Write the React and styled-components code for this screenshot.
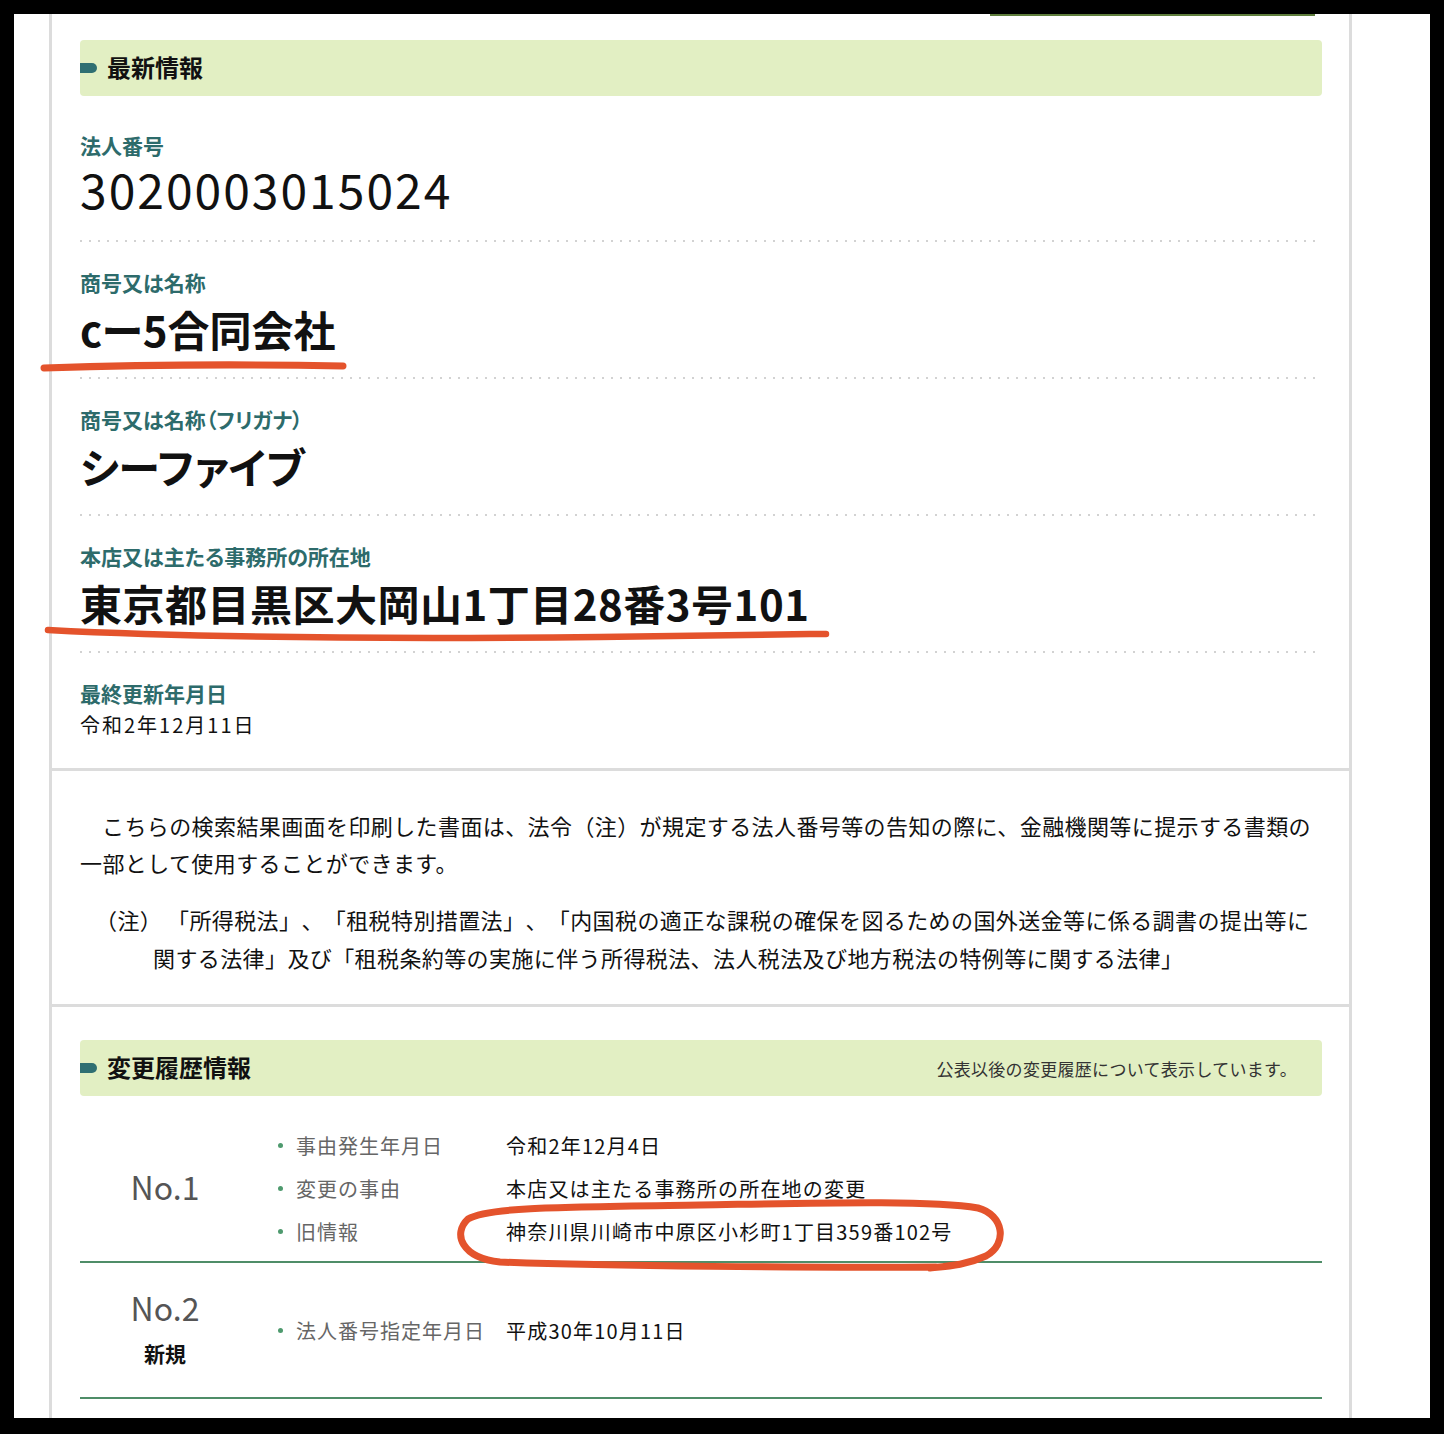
import React from 'react';
import styled, { createGlobalStyle } from 'styled-components';

const Global = createGlobalStyle`
  html, body { margin: 0; padding: 0; background: #000; }
  body { font-family: "Noto Sans CJK JP", "Noto Sans", sans-serif; color: #111; }
  *, *::before, *::after { box-sizing: border-box; }
`;

const Screen = styled.div`
  position: relative;
  width: 1444px;
  height: 1434px;
  padding: 14px 14px 16px;
  background: #000;
  overflow: hidden;
`;

const Page = styled.div`
  height: 1404px;
  background: #fff;
  padding-left: 35px;
  overflow: hidden;
`;

const Panel = styled.div`
  width: 1303px;
  height: 100%;
  border-left: 3px solid #dcdcdc;
  border-right: 3px solid #dcdcdc;
  display: flex;
  flex-direction: column;
`;

const TopAccent = styled.div`
  flex: none;
  height: 2px;
  width: 325px;
  margin-left: 938px;
  background: #5e7d3c;
`;

const Section = styled.section`
  flex: ${p => (p.$grow ? 1 : 'none')};
  padding: ${p => p.$pad};
  border-bottom: ${p => (p.$last ? 'none' : '3px solid #dcdcdc')};
`;

const SectionHead = styled.div`
  display: flex;
  align-items: center;
  height: 56px;
  padding-right: 25px;
  background: #e2efc3;
  border-radius: 4px;
`;

const Marker = styled.span`
  flex: none;
  width: 17px;
  height: 10px;
  margin-right: 10px;
  background: #2f6f72;
  border-radius: 0 5px 5px 0;
`;

const HeadTitle = styled.h2`
  flex: 1;
  margin: 0 0 2px;
  font-size: 24px;
  font-weight: 700;
  line-height: 1;
  color: #111;
`;

const HeadNote = styled.span`
  font-size: 17px;
  letter-spacing: 0.3px;
  color: #333;
`;

const Field = styled.div`
  padding: 25px 0 ${p => p.$pb || 20}px;
  margin-top: ${p => (p.$first ? '9px' : '0')};
`;

const FieldLabel = styled.div`
  font-size: 21px;
  line-height: 30px;
  font-weight: 700;
  color: #2d6b6b;
  font-feature-settings: "palt";
`;

const FieldValue = styled.div`
  margin-top: ${p => p.$gap}px;
  font-size: ${p => p.$size}px;
  line-height: ${p => p.$lh}px;
  font-weight: ${p => p.$weight};
  letter-spacing: ${p => p.$spacing || 0}px;
  color: #111;
  font-feature-settings: "palt";
  white-space: nowrap;
`;

const Dots = styled.div`
  height: 2px;
  background-image: linear-gradient(to right, #d2d2d2 0 2px, transparent 2px 9px);
  background-size: 9px 2px;
  background-repeat: repeat-x;
`;

const Lead = styled.p`
  margin: 0;
  font-size: 22px;
  letter-spacing: 0.4px;
  line-height: 37px;
  text-indent: 1em;
  color: #111;
`;

const Note = styled.p`
  margin: 19px 0 0;
  padding-left: 73px;
  text-indent: -58px;
  font-size: 22px;
  letter-spacing: 0.4px;
  line-height: 38px;
  color: #111;
  text-spacing-trim: space-all;
`;

const NoteMark = styled.span`
  display: inline-block;
  width: 72px;
  text-indent: 0;
`;

const HistoryList = styled.div`
  margin-top: 20px;
`;

const HistoryRow = styled.div`
  display: flex;
  align-items: center;
  padding: ${p => (p.$roomy ? '24px 0' : '8px 0')};
  border-bottom: 2px solid #4f8d68;
`;

const NumCol = styled.div`
  flex: none;
  width: 170px;
  display: flex;
  flex-direction: column;
  align-items: center;
`;

const NumLabel = styled.div`
  font-size: 32px;
  line-height: 40px;
  color: #555;
  margin-top: ${p => (p.$solo ? '-6px' : '0')};
`;

const NumTag = styled.div`
  margin-top: 6px;
  font-size: 21px;
  line-height: 40px;
  font-weight: 700;
  color: #111;
`;

const Items = styled.ul`
  margin: 0;
  padding: 0;
  list-style: none;
`;

const Item = styled.li`
  display: flex;
  align-items: center;
  height: 43px;
  font-size: 20px;
  letter-spacing: 1px;
  &::before {
    content: "";
    flex: none;
    width: 5px;
    height: 5px;
    margin: 0 13px 0 28px;
    border-radius: 50%;
    background: #4e9a6e;
  }
`;

const ItemLabel = styled.span`
  flex: none;
  width: 210px;
  color: #666;
`;

const ItemValue = styled.span`
  color: #111;
  letter-spacing: 1.2px;
  white-space: nowrap;
`;

const Marks = styled.svg`
  position: absolute;
  left: 0;
  top: 0;
  width: 1444px;
  height: 1434px;
  pointer-events: none;
`;

const fields = [
  { label: '法人番号', value: '3020003015024', size: 48, lh: 56, weight: 400, spacing: 2, gap: 0, pb: 24 },
  { label: '商号又は名称', value: 'cー5合同会社', size: 42, lh: 56, weight: 700, gap: 4 },
  { label: '商号又は名称（フリガナ）', value: 'シーファイブ', size: 42, lh: 56, weight: 700, gap: 4 },
  { label: '本店又は主たる事務所の所在地', value: '東京都目黒区大岡山1丁目28番3号101', size: 42, lh: 56, weight: 700, spacing: 0.5, gap: 4 },
];

const history = [
  {
    no: 'No.1',
    items: [
      ['事由発生年月日', '令和2年12月4日'],
      ['変更の事由', '本店又は主たる事務所の所在地の変更'],
      ['旧情報', '神奈川県川崎市中原区小杉町1丁目359番102号'],
    ],
  },
  {
    no: 'No.2',
    tag: '新規',
    items: [['法人番号指定年月日', '平成30年10月11日']],
  },
];

export default function App() {
  return (
    <>
      <Global />
      <Screen>
        <Page>
          <Panel>
            <TopAccent />
            <Section $pad="24px 27px 8px 28px">
              <SectionHead>
                <Marker />
                <HeadTitle>最新情報</HeadTitle>
              </SectionHead>
              {fields.map((f, i) => (
                <React.Fragment key={f.label}>
                  <Field $first={i === 0} $pb={f.pb}>
                    <FieldLabel>{f.label}</FieldLabel>
                    <FieldValue $size={f.size} $lh={f.lh} $weight={f.weight} $spacing={f.spacing} $gap={f.gap}>
                      {f.value}
                    </FieldValue>
                  </Field>
                  <Dots />
                </React.Fragment>
              ))}
              <Field>
                <FieldLabel>最終更新年月日</FieldLabel>
                <FieldValue $size={20} $lh={30} $weight={400} $spacing={2} $gap={2}>
                  令和2年12月11日
                </FieldValue>
              </Field>
            </Section>

            <Section $pad="36px 27px 28px 28px">
              <Lead>
                こちらの検索結果画面を印刷した書面は、法令（注）が規定する法人番号等の告知の際に、金融機関等に提示する書類の一部として使用することができます。
              </Lead>
              <Note>
                <NoteMark>（注）</NoteMark>「所得税法」、「租税特別措置法」、「内国税の適正な課税の確保を図るための国外送金等に係る調書の提出等に
                <br />
                関する法律」及び「租税条約等の実施に伴う所得税法、法人税法及び地方税法の特例等に関する法律」
              </Note>
            </Section>

            <Section $pad="33px 27px 0 28px" $grow $last>
              <SectionHead>
                <Marker />
                <HeadTitle>変更履歴情報</HeadTitle>
                <HeadNote>公表以後の変更履歴について表示しています。</HeadNote>
              </SectionHead>
              <HistoryList>
                {history.map(h => (
                  <HistoryRow key={h.no} $roomy={!!h.tag}>
                    <NumCol>
                      <NumLabel $solo={!h.tag}>{h.no}</NumLabel>
                      {h.tag && <NumTag>{h.tag}</NumTag>}
                    </NumCol>
                    <Items>
                      {h.items.map(([k, v]) => (
                        <Item key={k}>
                          <ItemLabel>{k}</ItemLabel>
                          <ItemValue>{v}</ItemValue>
                        </Item>
                      ))}
                    </Items>
                  </HistoryRow>
                ))}
              </HistoryList>
            </Section>
          </Panel>
        </Page>

        <Marks viewBox="0 0 1444 1434">
          <g fill="none" stroke="#e4532c" strokeLinecap="round" strokeLinejoin="round">
            <path d="M44 368 Q190 363 343 366" strokeWidth="7" />
            <path d="M48 630 C200 638 400 639 600 637 S790 634 826 634" strokeWidth="6.5" />
            <path
              d="M936 1267 C820 1268 600 1266 500 1262 C462 1258 452 1234 468 1219 C488 1207 560 1207 700 1205 C820 1203 930 1200 978 1208 C1004 1215 1008 1244 986 1256 C966 1265 950 1266 930 1268"
              strokeWidth="7"
            />
          </g>
        </Marks>
      </Screen>
    </>
  );
}
